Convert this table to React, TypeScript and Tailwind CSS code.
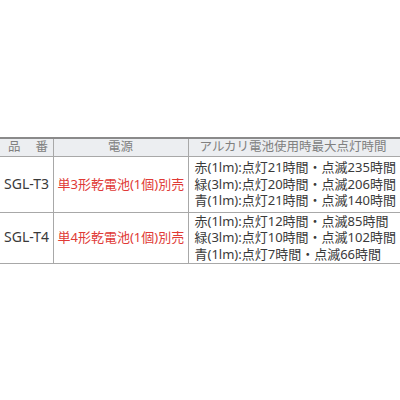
const rows = [
  {
    code: "SGL-T3",
    power: "単3形乾電池(1個)別売",
    times: [
      "赤(1lm):点灯21時間・点滅235時間",
      "緑(3lm):点灯20時間・点滅206時間",
      "青(1lm):点灯21時間・点滅140時間",
    ],
    h: "h-[56px]",
  },
  {
    code: "SGL-T4",
    power: "単4形乾電池(1個)別売",
    times: [
      "赤(1lm):点灯12時間・点滅85時間",
      "緑(3lm):点灯10時間・点滅102時間",
      "青(1lm):点灯7時間・点滅66時間",
    ],
    h: "h-[51px]",
  },
];

export default function App() {
  return (
    <div
      className="w-[400px] h-[400px] bg-white overflow-hidden pt-[137px]"
      style={{ fontFamily: '"Noto Sans", "Noto Sans CJK JP", sans-serif' }}
    >
      <table className="w-[420px] border-collapse text-[12.5px] leading-[16.5px] text-[#3a3a3a] whitespace-nowrap">
        <thead>
          <tr className="bg-[#eceef1] text-[#808080] h-[18px] border-t-2 border-[#8a8a8a] border-b border-b-[#a8a8a8]">
            <th className="w-[53px] font-normal text-left pl-[8px] border-r border-[#a8a8a8]">
              品<span className="inline-block w-[15px]" />番
            </th>
            <th className="w-[135px] font-normal text-center border-r border-[#a8a8a8]">電源</th>
            <th className="font-normal text-left pl-[11px]">アルカリ電池使用時最大点灯時間</th>
          </tr>
        </thead>
        <tbody>
          {rows.map((r) => (
            <tr key={r.code} className={`${r.h} border-b border-[#a8a8a8]`}>
              <td className="border-r border-[#a8a8a8] pl-[4px] text-[14px]">{r.code}</td>
              <td className="border-r border-[#a8a8a8] pl-[4px] text-[#e03a36] text-[13px]">
                {r.power}
              </td>
              <td className="pl-[6px] text-[13px]">
                {r.times.map((t) => (
                  <div key={t}>{t}</div>
                ))}
              </td>
            </tr>
          ))}
        </tbody>
      </table>
    </div>
  );
}
